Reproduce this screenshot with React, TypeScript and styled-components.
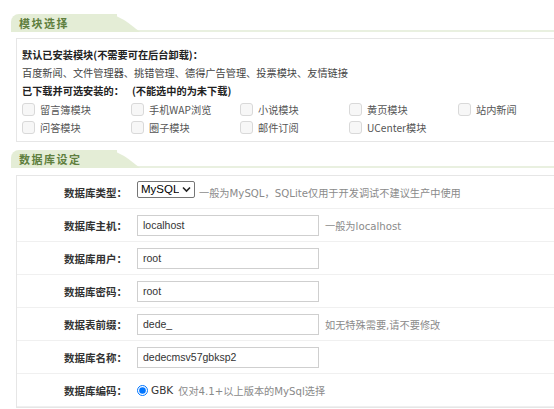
import React from "react";
import styled, { createGlobalStyle } from "styled-components";

const GlobalStyle = createGlobalStyle`
  html, body {
    margin: 0;
    padding: 0;
    background: #fff;
    overflow: hidden;
  }
  body {
    font-family: "Liberation Sans", "Noto Sans CJK SC", sans-serif;
    font-size: 10.2px;
    color: #333;
  }
`;

const Page = styled.div`
  width: 620px;
  padding: 14px 0 0 11px;
`;

const TabBar = styled.div`
  height: 16px;
  border-bottom: 2px solid #e9f0e0;
`;

const Tab = styled.div`
  position: relative;
  display: inline-block;
  height: 18px;
  width: 98px;
  padding-left: 8px;
  background: #e4edd6;
  border-top-left-radius: 8px;
  color: #5f7f3e;
  font-family: "Noto Sans CJK SC", sans-serif;
  font-weight: 700;
  font-size: 11px;
  letter-spacing: 1.5px;
  line-height: 18px;

  &::after {
    content: "";
    position: absolute;
    top: 0;
    bottom: 0;
    left: 100px;
    width: 29px;
    background: #e4edd6;
    border-top-right-radius: 9px;
    transform: skewX(52deg);
    transform-origin: bottom left;
  }
`;

const Box = styled.div<{ $pad?: boolean }>`
  margin: ${(p) => (p.$pad ? "6px 0 8px 5px" : "7px 0 0 5px")};
  border: 1px solid #e6e6e6;
  border-right: none;
  padding: ${(p) => (p.$pad ? "7px 0 5px 5px" : "0")};
`;

const Line = styled.div<{ $bold?: boolean }>`
  height: 18px;
  line-height: 18px;
  font-family: "Noto Sans CJK SC", sans-serif;
  font-weight: ${(p) => (p.$bold ? 700 : 400)};
  color: ${(p) => (p.$bold ? "#222" : "#444")};
  white-space: nowrap;
`;

const Spacer = styled.span`
  display: inline-block;
  width: 8px;
`;

const CheckGrid = styled.div`
  display: grid;
  grid-template-columns: repeat(5, 109px);
`;

const CheckItem = styled.label`
  display: flex;
  align-items: center;
  height: 18px;
  color: #555;
  font-family: "Noto Sans CJK SC", sans-serif;
  white-space: nowrap;
`;

const CheckBox = styled.span`
  width: 11px;
  height: 11px;
  border: 1px solid #d9d9d9;
  border-radius: 3px;
  background: #f7f7f7;
  margin-right: 5px;
  flex-shrink: 0;
`;

const Row = styled.div`
  display: flex;
  align-items: center;
  height: 32px;
  border-bottom: 1px solid #f0f0f0;
`;

const Label = styled.div`
  width: 110px;
  text-align: right;
  font-family: "Noto Sans CJK SC", sans-serif;
  font-weight: 700;
  font-size: 10.5px;
  color: #333;
  flex-shrink: 0;
`;

const Value = styled.div`
  display: flex;
  align-items: center;
  padding-left: 10px;
  white-space: nowrap;
`;

const SelectWrap = styled.div`
  position: relative;
  display: flex;
  margin-bottom: 6px;
`;

const Select = styled.select`
  appearance: none;
  width: 58px;
  height: 17px;
  margin: 0;
  padding: 0 15px 0 3px;
  font-family: "Liberation Sans", sans-serif;
  font-size: 11.5px;
  line-height: 15px;
  color: #000;
  border: 1px solid #767676;
  border-radius: 2px;
  background: #fff;
  outline: none;
`;

const Chevron = styled.svg`
  position: absolute;
  right: 4px;
  top: 5px;
  width: 9px;
  height: 7px;
  pointer-events: none;
`;

const Input = styled.input`
  box-sizing: border-box;
  width: 182px;
  height: 21px;
  padding: 0 5px;
  border: 1px solid #cfcfcf;
  font-family: "Liberation Sans", sans-serif;
  font-size: 10.5px;
  color: #333;
  outline: none;
`;

const Hint = styled.span<{ $gap?: number }>`
  margin-left: ${(p) => p.$gap ?? 6}px;
  color: #8a8a8a;
  font-family: "DejaVu Sans", "Noto Sans CJK SC", sans-serif;
  font-size: 10.2px;
`;

const Radio = styled.input`
  width: 11px;
  height: 11px;
  margin: 0 3px 0 0;
`;

const RadioText = styled.span`
  font-family: "DejaVu Sans", sans-serif;
  font-size: 10.5px;
  color: #333;
`;

const modules = [
  "留言簿模块",
  "手机WAP浏览",
  "小说模块",
  "黄页模块",
  "站内新闻",
  "问答模块",
  "圈子模块",
  "邮件订阅",
  "UCenter模块",
];

type FieldProps = {
  label: string;
  value: string;
  hint?: string;
};

function Field(props: FieldProps) {
  return (
    <Row>
      <Label>{props.label}</Label>
      <Value>
        <Input defaultValue={props.value} />
        {props.hint ? <Hint>{props.hint}</Hint> : null}
      </Value>
    </Row>
  );
}

export default function App() {
  return (
    <Page>
      <GlobalStyle />
      <TabBar>
        <Tab>模块选择</Tab>
      </TabBar>
      <Box $pad>
        <Line $bold>默认已安装模块(不需要可在后台卸载)：</Line>
        <Line>百度新闻、文件管理器、挑错管理、德得广告管理、投票模块、友情链接</Line>
        <Line $bold>
          已下载并可选安装的：<Spacer />(不能选中的为未下载)
        </Line>
        <CheckGrid>
          {modules.map((m) => (
            <CheckItem key={m}>
              <CheckBox />
              {m}
            </CheckItem>
          ))}
        </CheckGrid>
      </Box>
      <TabBar>
        <Tab>数据库设定</Tab>
      </TabBar>
      <Box>
        <Row>
          <Label>数据库类型：</Label>
          <Value>
            <SelectWrap>
              <Select defaultValue="mysql">
                <option value="mysql">MySQL</option>
                <option value="sqlite">SQLite</option>
              </Select>
              <Chevron viewBox="0 0 9 7">
                <path d="M1 1.5 L4.5 5 L8 1.5" fill="none" stroke="#222" strokeWidth="1.6" />
              </Chevron>
            </SelectWrap>
            <Hint $gap={4}>一般为MySQL，SQLite仅用于开发调试不建议生产中使用</Hint>
          </Value>
        </Row>
        <Field label="数据库主机：" value="localhost" hint="一般为localhost" />
        <Field label="数据库用户：" value="root" />
        <Field label="数据库密码：" value="root" />
        <Field label="数据表前缀：" value="dede_" hint="如无特殊需要,请不要修改" />
        <Field label="数据库名称：" value="dedecmsv57gbksp2" />
        <Row>
          <Label>数据库编码：</Label>
          <Value>
            <Radio type="radio" name="charset" defaultChecked />
            <RadioText>GBK</RadioText>
            <Hint $gap={5}>仅对4.1+以上版本的MySql选择</Hint>
          </Value>
        </Row>
      </Box>
    </Page>
  );
}
